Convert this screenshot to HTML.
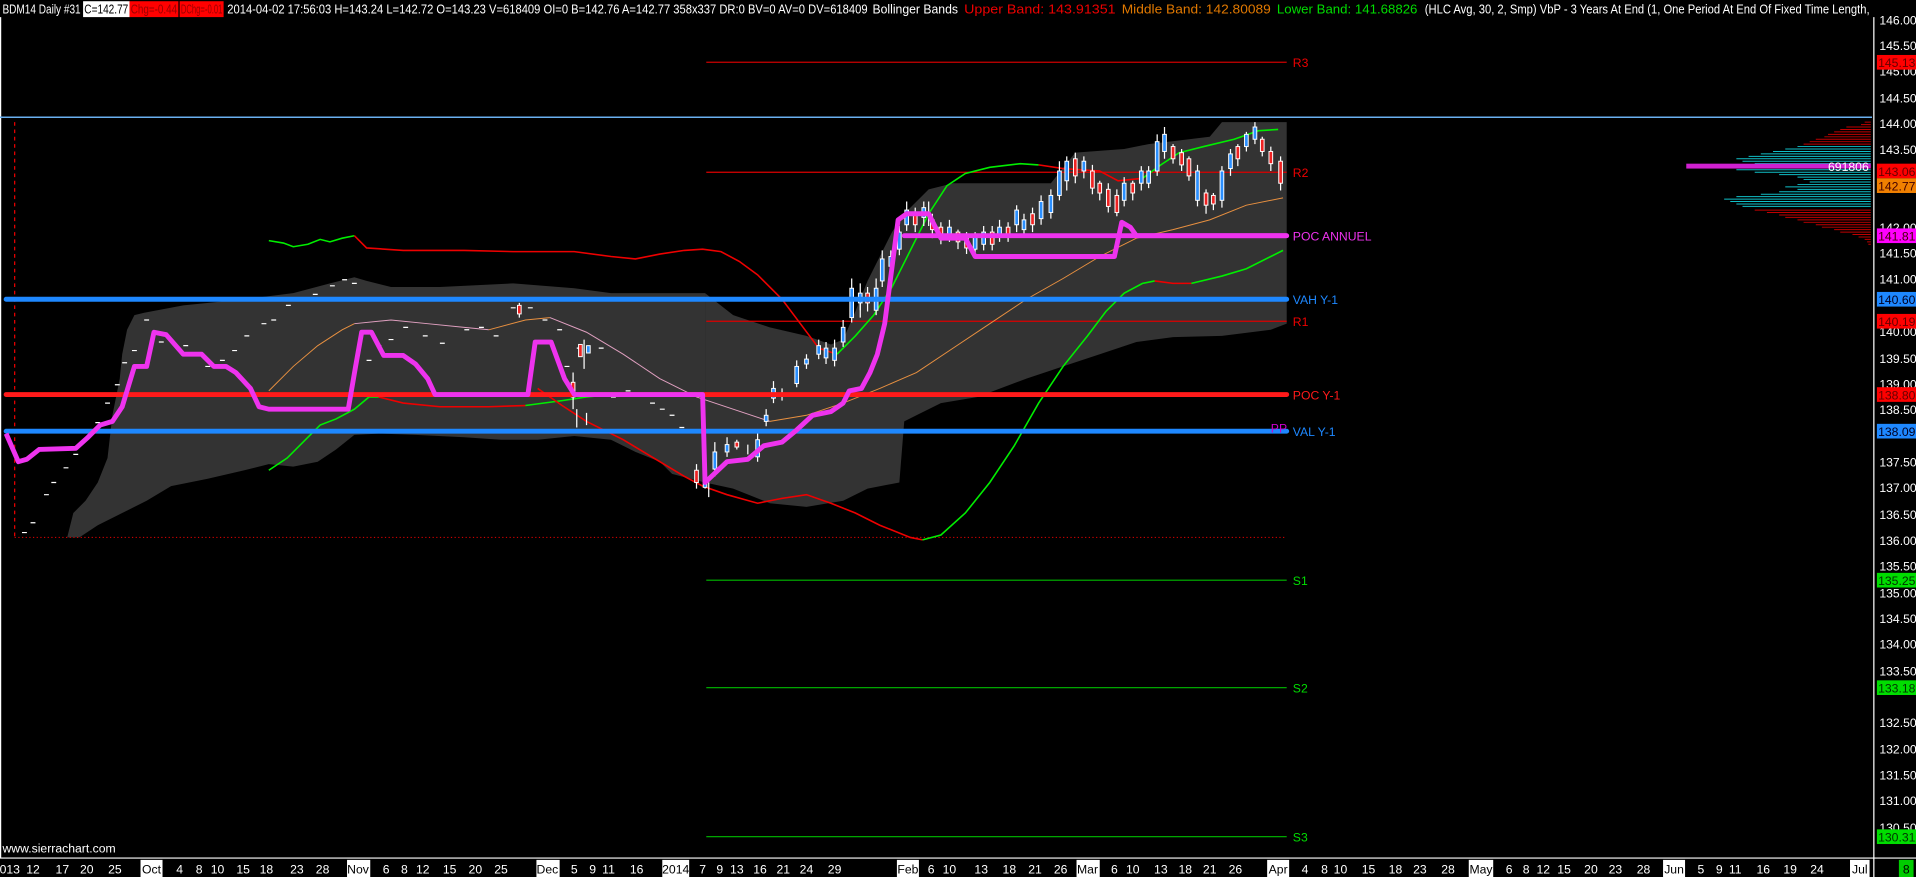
<!DOCTYPE html>
<html><head><meta charset="utf-8"><style>
html,body{margin:0;padding:0;background:#000;width:1916px;height:877px;overflow:hidden}
svg{display:block}
text{font-family:"Liberation Sans",sans-serif}
</style></head><body>
<svg width="1916" height="877" viewBox="0 0 1568 718" preserveAspectRatio="none" xmlns="http://www.w3.org/2000/svg">
<rect width="1568" height="718" fill="#000"/>
<g font-size="10.5" fill="#fff">
<text x="2" y="11" textLength="64" lengthAdjust="spacingAndGlyphs">BDM14  Daily  #31</text>
<rect x="68" y="1" width="38" height="13" fill="#fff"/>
<text x="69" y="11" fill="#000" textLength="36" lengthAdjust="spacingAndGlyphs">C=142.77</text>
<rect x="106" y="1" width="40" height="13" fill="#f00"/>
<text x="107" y="11" fill="#900" textLength="38" lengthAdjust="spacingAndGlyphs">Chg=-0.44</text>
<rect x="147" y="1" width="36" height="13" fill="#f00"/>
<text x="148" y="11" fill="#900" textLength="34" lengthAdjust="spacingAndGlyphs">DChg=-0.01</text>
<text x="186" y="11" textLength="524" lengthAdjust="spacingAndGlyphs">2014-04-02 17:56:03 H=143.24 L=142.72 O=143.23 V=618409 OI=0 B=142.76 A=142.77 358x337 DR:0 BV=0 AV=0 DV=618409</text>
<text x="714" y="11" textLength="70" lengthAdjust="spacingAndGlyphs">Bollinger Bands</text>
<text x="789" y="11" fill="#e00" textLength="124" lengthAdjust="spacingAndGlyphs">Upper Band: 143.91351</text>
<text x="918" y="11" fill="#e07800" textLength="122" lengthAdjust="spacingAndGlyphs">Middle Band: 142.80089</text>
<text x="1045" y="11" fill="#0d0" textLength="115" lengthAdjust="spacingAndGlyphs">Lower Band: 141.68826</text>
<text x="1166" y="11" textLength="364" lengthAdjust="spacingAndGlyphs">(HLC Avg, 30, 2, Smp)  VbP - 3 Years At End   (1, One Period At End Of Fixed Time Length,</text>
</g>
<line x1="0.5" y1="14" x2="0.5" y2="702" stroke="#fff" stroke-width="1"/>
<polygon fill="#333" points="55,440 60,420 70,410 80,395 88,375 92,340 98,310 100,290 104,270 110,258 118,256 150,250 200,245 240,240 270,232 290,227 300,230 320,235 360,235 420,232 470,236 500,240 577,240 577,395 565,392 550,388 540,378 520,370 500,360 470,357 440,360 410,360 380,358 340,356 310,355 290,356 275,368 260,378 240,382 220,380 200,385 170,392 140,398 120,410 100,420 80,430 65,440"/>
<polygon fill="#333" points="577,240 600,258 630,268 660,275 680,282 690,278 700,255 710,230 720,210 730,190 740,175 760,155 780,150 860,150 880,125 920,122 940,118 990,112 1000,100 1053,100 1053,265 1040,270 1000,275 960,276 930,280 900,290 870,300 840,310 800,325 770,330 750,340 740,345 736,395 710,400 690,410 660,415 630,412 600,400 577,395"/>
<g stroke-width="1">
<line x1="578" y1="51" x2="1053" y2="51" stroke="#c00"/>
<line x1="578" y1="141" x2="1053" y2="141" stroke="#d00"/>
<line x1="578" y1="263" x2="1053" y2="263" stroke="#d00"/>
<line x1="578" y1="475" x2="1053" y2="475" stroke="#0b0"/>
<line x1="578" y1="563" x2="1053" y2="563" stroke="#0b0"/>
<line x1="578" y1="685" x2="1053" y2="685" stroke="#0b0"/>
<line x1="12" y1="100" x2="12" y2="440" stroke="#e00" stroke-dasharray="3,3"/>
<line x1="12" y1="440" x2="1053" y2="440" stroke="#c00" stroke-dasharray="1,2"/>
</g>
<line x1="0" y1="96" x2="1532" y2="96" stroke="#6ab0f0" stroke-width="1.3"/>
<g fill="none" stroke-width="1.3">
<polyline stroke="#0e0" points="220,197 232,199 240,202 252,200 262,196 270,198 280,195 290,193"/>
<polyline stroke="#e00" points="290,193 300,203 330,205 380,205 420,206 470,206 500,210 520,212 540,208 560,205 575,204 590,206 605,214 620,225 640,245 655,265 670,285 685,290"/>
<polyline stroke="#0e0" points="685,290 700,275 715,258 730,235 745,205 760,175 775,152 790,142 810,137 835,134 850,135"/>
<polyline stroke="#e00" points="850,135 870,138 900,140 915,148 935,146"/>
<polyline stroke="#0e0" points="935,146 950,135 965,125 985,120 1010,114 1030,107 1046,106"/>
<polyline stroke="#0e0" points="220,385 235,375 250,360 262,348 275,343 290,335 302,325 310,325"/>
<polyline stroke="#e00" points="310,325 330,330 360,333 400,333 430,332"/>
<polyline stroke="#0e0" points="430,332 460,328 480,325 500,323"/>
<polyline stroke="#e00" points="440,318 460,332 480,345 510,360 540,378 560,390 575,398 595,405 620,412 640,408 660,405 680,412 700,420 720,430 745,440 755,442"/>
<polyline stroke="#0e0" points="755,442 770,438 790,420 810,395 830,365 850,330 870,300 890,275 905,255 920,240 935,232 945,230"/>
<polyline stroke="#e00" points="945,230 960,232 975,232"/>
<polyline stroke="#0e0" points="975,232 1000,226 1020,220 1040,210 1050,205"/>
<polyline stroke="#e89040" stroke-width="0.8" points="220,320 240,300 260,283 280,270 290,265"/>
<polyline stroke="#e0a0c0" stroke-width="0.8" points="290,265 320,262 350,265 380,268 400,270"/>
<polyline stroke="#e89040" stroke-width="0.8" points="400,270 430,262 450,260"/>
<polyline stroke="#e0a0c0" stroke-width="0.8" points="450,260 480,272 510,290 540,310 570,325 600,335 630,345"/>
<polyline stroke="#e89040" stroke-width="0.8" points="630,345 660,340 690,330 720,318 750,305 780,285 810,265 840,245 870,228 900,210 930,195 960,188 990,180 1020,168 1050,162"/>
</g>
<g stroke="#fff" stroke-width="1">
<path d="M18,436h4M25,428h4M36,405h4M42,395h4M52,383h4M60,372h4M68,360h4M78,346h4M86,330h4M94,315h4M100,297h4M108,287h4M118,262h4M130,280h4M150,283h4M158,290h4M168,300h4M180,295h4M190,287h4M200,275h4M214,265h4M222,262h4M234,250h4M244,246h4M256,241h4M270,234h4M280,229h4M288,232h4M300,295h4M308,283h4M318,278h4M330,268h4M346,275h4M360,281h4M380,270h4M392,268h4M404,275h4M418,252h4M432,252h4M444,262h4M456,270h4M462,300h4M472,285h4M490,285h4M500,325h4M512,320h4M522,322h4M532,330h4M540,335h4M548,340h4M556,350h4"/>
<path d="M425,248v12M478,278v24M469,305v30M472,335v15M480,338v10M580,395v12M612,364v8M640,318v10M704,245v15M760,165v20M1048,128v28"/>
</g>
<g stroke="#fff" stroke-width="0.8">
<rect x="423.5" y="250" width="3" height="7" fill="#e22"/>
<rect x="473.5" y="282" width="3" height="10" fill="#e22"/>
<rect x="480" y="283" width="3" height="6" fill="#2a8fff"/>
<rect x="467.5" y="313" width="3" height="12" fill="#e22"/>
</g>
<g stroke="#fff" stroke-width="1">
<path d="M570,380v20M577,388v12M585,362v28M595,358v16M603,360v8M620,352v26M627,335v14M633,312v18M652,295v22M660,290v12M670,278v16M676,280v18M683,278v22M690,262v22M697,228v36M704,232v22M710,235v20M717,228v30M722,205v30M729,205v20M736,185v24M742,165v24M749,170v20M756,165v20M763,175v20M770,182v18M777,180v18M784,188v16M791,190v18M798,190v18M805,185v20M812,185v20M818,180v18M825,182v16M832,168v22M838,175v18M845,170v20M852,160v24M860,155v24M867,132v32M873,128v28M880,125v25M887,128v18M894,135v24M900,148v16M907,150v24M914,155v22M920,145v24M927,148v16M934,136v20M940,136v18M947,110v34M953,104v26M960,118v16M967,122v18M973,128v20M980,135v34M987,155v20M993,158v14M1000,136v34M1007,122v22M1013,118v18M1020,108v16M1027,100v18M1033,112v16M1040,120v20"/>
</g>
<g stroke="#fff" stroke-width="0.8">
<rect x="568.5" y="385" width="3" height="10" fill="#e22"/>
<rect x="575.5" y="394" width="3" height="5" fill="#2a8fff"/>
<rect x="583.5" y="370" width="3" height="14" fill="#2a8fff"/>
<rect x="593.5" y="364" width="3" height="6" fill="#2a8fff"/>
<rect x="601.5" y="362" width="3" height="4" fill="#e22"/>
<rect x="618.5" y="360" width="3" height="14" fill="#2a8fff"/>
<rect x="625.5" y="340" width="3" height="5" fill="#2a8fff"/>
<rect x="631.5" y="318" width="3" height="8" fill="#2a8fff"/>
<rect x="650.5" y="300" width="3" height="14" fill="#2a8fff"/>
<rect x="658.5" y="294" width="3" height="4" fill="#2a8fff"/>
<rect x="668.5" y="283" width="3" height="7" fill="#2a8fff"/>
<rect x="674.5" y="285" width="3" height="8" fill="#2a8fff"/>
<rect x="681.5" y="285" width="3" height="10" fill="#2a8fff"/>
<rect x="688.5" y="268" width="3" height="12" fill="#2a8fff"/>
<rect x="695.5" y="236" width="3" height="24" fill="#2a8fff"/>
<rect x="702.5" y="240" width="3" height="8" fill="#2a8fff"/>
<rect x="708.5" y="240" width="3" height="8" fill="#e22"/>
<rect x="715.5" y="236" width="3" height="18" fill="#2a8fff"/>
<rect x="720.5" y="212" width="3" height="18" fill="#2a8fff"/>
<rect x="727.5" y="210" width="3" height="8" fill="#2a8fff"/>
<rect x="734.5" y="190" width="3" height="14" fill="#2a8fff"/>
<rect x="740.5" y="172" width="3" height="12" fill="#2a8fff"/>
<rect x="747.5" y="176" width="3" height="8" fill="#e22"/>
<rect x="754.5" y="170" width="3" height="8" fill="#2a8fff"/>
<rect x="761.5" y="180" width="3" height="8" fill="#e22"/>
<rect x="768.5" y="186" width="3" height="8" fill="#e22"/>
<rect x="775.5" y="186" width="3" height="8" fill="#2a8fff"/>
<rect x="782.5" y="190" width="3" height="8" fill="#e22"/>
<rect x="789.5" y="195" width="3" height="8" fill="#e22"/>
<rect x="796.5" y="194" width="3" height="10" fill="#2a8fff"/>
<rect x="803.5" y="190" width="3" height="10" fill="#2a8fff"/>
<rect x="810.5" y="190" width="3" height="10" fill="#e22"/>
<rect x="816.5" y="186" width="3" height="8" fill="#2a8fff"/>
<rect x="823.5" y="186" width="3" height="8" fill="#e22"/>
<rect x="830.5" y="172" width="3" height="12" fill="#2a8fff"/>
<rect x="836.5" y="180" width="3" height="8" fill="#2a8fff"/>
<rect x="843.5" y="175" width="3" height="9" fill="#e22"/>
<rect x="850.5" y="165" width="3" height="14" fill="#2a8fff"/>
<rect x="858.5" y="160" width="3" height="14" fill="#2a8fff"/>
<rect x="865.5" y="140" width="3" height="20" fill="#2a8fff"/>
<rect x="871.5" y="132" width="3" height="16" fill="#2a8fff"/>
<rect x="878.5" y="130" width="3" height="14" fill="#e22"/>
<rect x="885.5" y="132" width="3" height="8" fill="#2a8fff"/>
<rect x="892.5" y="140" width="3" height="14" fill="#e22"/>
<rect x="898.5" y="150" width="3" height="8" fill="#e22"/>
<rect x="905.5" y="155" width="3" height="14" fill="#e22"/>
<rect x="912.5" y="160" width="3" height="14" fill="#e22"/>
<rect x="918.5" y="150" width="3" height="14" fill="#2a8fff"/>
<rect x="925.5" y="150" width="3" height="8" fill="#e22"/>
<rect x="932.5" y="140" width="3" height="10" fill="#2a8fff"/>
<rect x="938.5" y="140" width="3" height="10" fill="#2a8fff"/>
<rect x="945.5" y="116" width="3" height="24" fill="#2a8fff"/>
<rect x="951.5" y="110" width="3" height="14" fill="#2a8fff"/>
<rect x="958.5" y="120" width="3" height="10" fill="#e22"/>
<rect x="965.5" y="125" width="3" height="10" fill="#e22"/>
<rect x="971.5" y="130" width="3" height="14" fill="#e22"/>
<rect x="978.5" y="140" width="3" height="24" fill="#2a8fff"/>
<rect x="985.5" y="158" width="3" height="10" fill="#e22"/>
<rect x="991.5" y="160" width="3" height="7" fill="#e22"/>
<rect x="998.5" y="140" width="3" height="24" fill="#2a8fff"/>
<rect x="1005.5" y="126" width="3" height="12" fill="#2a8fff"/>
<rect x="1011.5" y="120" width="3" height="10" fill="#e22"/>
<rect x="1018.5" y="110" width="3" height="10" fill="#2a8fff"/>
<rect x="1025.5" y="104" width="3" height="10" fill="#2a8fff"/>
<rect x="1031.5" y="114" width="3" height="10" fill="#e22"/>
<rect x="1038.5" y="124" width="3" height="10" fill="#e22"/>
<rect x="1046.5" y="132" width="3" height="18" fill="#e22"/>
</g>
<g stroke-linecap="round">
<line x1="5" y1="245" x2="1053" y2="245" stroke="#1e88ff" stroke-width="4"/>
<line x1="5" y1="323" x2="1053" y2="323" stroke="#ff1a1a" stroke-width="4"/>
<line x1="5" y1="353" x2="1053" y2="353" stroke="#1e88ff" stroke-width="4"/>
<line x1="740" y1="193" x2="1053" y2="193" stroke="#ee33ee" stroke-width="4"/>
</g>
<polyline fill="none" stroke="#ee33ee" stroke-width="4" stroke-linejoin="round" points="5,355 15,378 22,376 32,368 62,367 72,358 82,348 92,345 100,333 110,300 120,300 126,272 136,274 150,290 165,290 175,300 185,300 193,305 205,318 212,333 220,335 285,335 291,300 296,272 304,272 314,291 330,291 340,298 350,310 356,323 432,323 438,280 451,280 462,310 470,323 575,323 577,395 595,378 612,376 625,365 640,362 652,352 665,340 680,337 690,330 695,320 705,318 712,305 718,290 724,265 735,180 742,175 760,175 770,195 790,195 798,210 850,210 912,210 918,182 925,186 930,193 1053,193"/>
<g font-size="10">
<text x="1058" y="55" fill="#e00">R3</text>
<text x="1058" y="145" fill="#e00">R2</text>
<text x="1058" y="267" fill="#e00">R1</text>
<text x="1058" y="197" fill="#ee33ee">POC ANNUEL</text>
<text x="1058" y="249" fill="#1e88ff">VAH Y-1</text>
<text x="1058" y="327" fill="#ff1a1a">POC Y-1</text>
<text x="1040" y="354" fill="#c0c">PP</text>
<text x="1058" y="357" fill="#1e88ff">VAL Y-1</text>
<text x="1058" y="479" fill="#0d0">S1</text>
<text x="1058" y="567" fill="#0d0">S2</text>
<text x="1058" y="689" fill="#0d0">S3</text>
</g>
<g stroke-width="0.8">
<path stroke="#c00000" d="M1526,100h5M1523,102h8M1511,104h20M1506,106h25M1501,108h30M1496,110h35M1493,112h38M1486,114h45M1481,116h50M1476,118h55"/>
<path stroke="#10c0c8" d="M1471,120h60M1461,122h70M1451,124h80M1441,126h90M1431,128h100M1421,130h110M1426,132h105M1436,134h95M1421,139h110M1436,141h95M1456,143h75M1471,145h60M1476,147h55M1481,149h50M1471,151h60M1461,153h70M1471,155h60M1456,157h75M1441,159h90M1421,161h110M1411,163h120M1416,165h115M1421,167h110M1426,169h105"/>
<path stroke="#c00000" d="M1436,172h95M1446,174h85M1456,176h75M1461,178h70M1471,180h60M1476,182h55M1486,184h45M1491,186h40M1501,188h30M1506,190h25M1516,192h15M1521,194h10M1526,196h5M1528,198h3M1529,200h2"/>
<rect x="1380" y="134" width="151" height="4" fill="#d020d0" stroke="none"/>
</g>
<text x="1496" y="140" font-size="10" fill="#fff">691806</text>
<line x1="1533.5" y1="14" x2="1533.5" y2="718" stroke="#fff" stroke-width="1"/>
<g font-size="10" fill="#fff">
<text x="1538" y="20">146.00</text>
<text x="1538" y="41">145.50</text>
<text x="1538" y="62">145.00</text>
<text x="1538" y="84">144.50</text>
<text x="1538" y="105">144.00</text>
<text x="1538" y="126">143.50</text>
<text x="1538" y="190">142.00</text>
<text x="1538" y="211">141.50</text>
<text x="1538" y="232">141.00</text>
<text x="1538" y="275">140.00</text>
<text x="1538" y="297">139.50</text>
<text x="1538" y="318">139.00</text>
<text x="1538" y="339">138.50</text>
<text x="1538" y="382">137.50</text>
<text x="1538" y="403">137.00</text>
<text x="1538" y="425">136.50</text>
<text x="1538" y="446">136.00</text>
<text x="1538" y="467">135.50</text>
<text x="1538" y="489">135.00</text>
<text x="1538" y="510">134.50</text>
<text x="1538" y="531">134.00</text>
<text x="1538" y="553">133.50</text>
<text x="1538" y="595">132.50</text>
<text x="1538" y="617">132.00</text>
<text x="1538" y="638">131.50</text>
<text x="1538" y="659">131.00</text>
<text x="1538" y="681">130.50</text>
</g>
<g font-size="10">
<rect x="1536" y="45" width="32" height="12" fill="#f00"/><text x="1537" y="55" fill="#600">145.13</text>
<rect x="1536" y="134" width="32" height="12" fill="#f00"/><text x="1537" y="144" fill="#600">143.06</text>
<rect x="1536" y="146" width="32" height="12" fill="#f08000"/><text x="1537" y="156" fill="#400">142.77</text>
<rect x="1536" y="187" width="32" height="12" fill="#f0f"/><text x="1537" y="197" fill="#400">141.81</text>
<rect x="1536" y="239" width="32" height="12" fill="#1e88ff"/><text x="1537" y="249" fill="#002">140.60</text>
<rect x="1536" y="257" width="32" height="12" fill="#f00"/><text x="1537" y="267" fill="#600">140.19</text>
<rect x="1536" y="317" width="32" height="12" fill="#f00"/><text x="1537" y="327" fill="#600">138.80</text>
<rect x="1536" y="347" width="32" height="12" fill="#1e88ff"/><text x="1537" y="357" fill="#002">138.09</text>
<rect x="1536" y="469" width="32" height="12" fill="#0d0"/><text x="1537" y="479" fill="#030">135.25</text>
<rect x="1536" y="557" width="32" height="12" fill="#0d0"/><text x="1537" y="567" fill="#030">133.18</text>
<rect x="1536" y="679" width="32" height="12" fill="#0d0"/><text x="1537" y="689" fill="#030">130.31</text>
</g>
<text x="2" y="698" font-size="10" fill="#fff">www.sierrachart.com</text>
<line x1="0" y1="702.5" x2="1568" y2="702.5" stroke="#fff" stroke-width="1"/>
<g font-size="10" fill="#fff" text-anchor="middle">
<text x="8" y="715">013</text><text x="27" y="715">12</text><text x="51" y="715">17</text><text x="71" y="715">20</text><text x="94" y="715">25</text>
<rect x="115" y="704" width="18" height="14" fill="#fff"/><text x="124" y="715" fill="#000">Oct</text>
<text x="147" y="715">4</text><text x="163" y="715">8</text><text x="178" y="715">10</text><text x="199" y="715">15</text><text x="218" y="715">18</text><text x="243" y="715">23</text><text x="264" y="715">28</text>
<rect x="284" y="704" width="19" height="14" fill="#fff"/><text x="293" y="715" fill="#000">Nov</text>
<text x="316" y="715">6</text><text x="331" y="715">8</text><text x="346" y="715">12</text><text x="368" y="715">15</text><text x="389" y="715">20</text><text x="410" y="715">25</text>
<rect x="439" y="704" width="19" height="14" fill="#fff"/><text x="448" y="715" fill="#000">Dec</text>
<text x="470" y="715">5</text><text x="485" y="715">9</text><text x="498" y="715">11</text><text x="521" y="715">16</text>
<rect x="542" y="704" width="22" height="14" fill="#fff"/><text x="553" y="715" fill="#000">2014</text>
<text x="575" y="715">7</text><text x="589" y="715">9</text><text x="603" y="715">13</text><text x="622" y="715">16</text><text x="641" y="715">21</text><text x="660" y="715">24</text><text x="683" y="715">29</text>
<rect x="734" y="704" width="18" height="14" fill="#fff"/><text x="743" y="715" fill="#000">Feb</text>
<text x="762" y="715">6</text><text x="777" y="715">10</text><text x="803" y="715">13</text><text x="826" y="715">18</text><text x="847" y="715">21</text><text x="868" y="715">26</text>
<rect x="881" y="704" width="19" height="14" fill="#fff"/><text x="890" y="715" fill="#000">Mar</text>
<text x="912" y="715">6</text><text x="927" y="715">10</text><text x="950" y="715">13</text><text x="970" y="715">18</text><text x="990" y="715">21</text><text x="1011" y="715">26</text>
<rect x="1037" y="704" width="18" height="14" fill="#fff"/><text x="1046" y="715" fill="#000">Apr</text>
<text x="1068" y="715">4</text><text x="1084" y="715">8</text><text x="1097" y="715">10</text><text x="1120" y="715">15</text><text x="1142" y="715">18</text><text x="1162" y="715">23</text><text x="1185" y="715">28</text>
<rect x="1202" y="704" width="20" height="14" fill="#fff"/><text x="1212" y="715" fill="#000">May</text>
<text x="1235" y="715">6</text><text x="1249" y="715">8</text><text x="1263" y="715">12</text><text x="1280" y="715">15</text><text x="1302" y="715">20</text><text x="1322" y="715">23</text><text x="1345" y="715">28</text>
<rect x="1361" y="704" width="18" height="14" fill="#fff"/><text x="1370" y="715" fill="#000">Jun</text>
<text x="1392" y="715">5</text><text x="1407" y="715">9</text><text x="1420" y="715">11</text><text x="1443" y="715">16</text><text x="1465" y="715">19</text><text x="1487" y="715">24</text>
<rect x="1514" y="704" width="16" height="14" fill="#fff"/><text x="1522" y="715" fill="#000">Jul</text>
<rect x="1554" y="704" width="12" height="14" fill="#0c0"/><text x="1560" y="715" fill="#000">8</text>
</g>
</svg>
</body></html>
